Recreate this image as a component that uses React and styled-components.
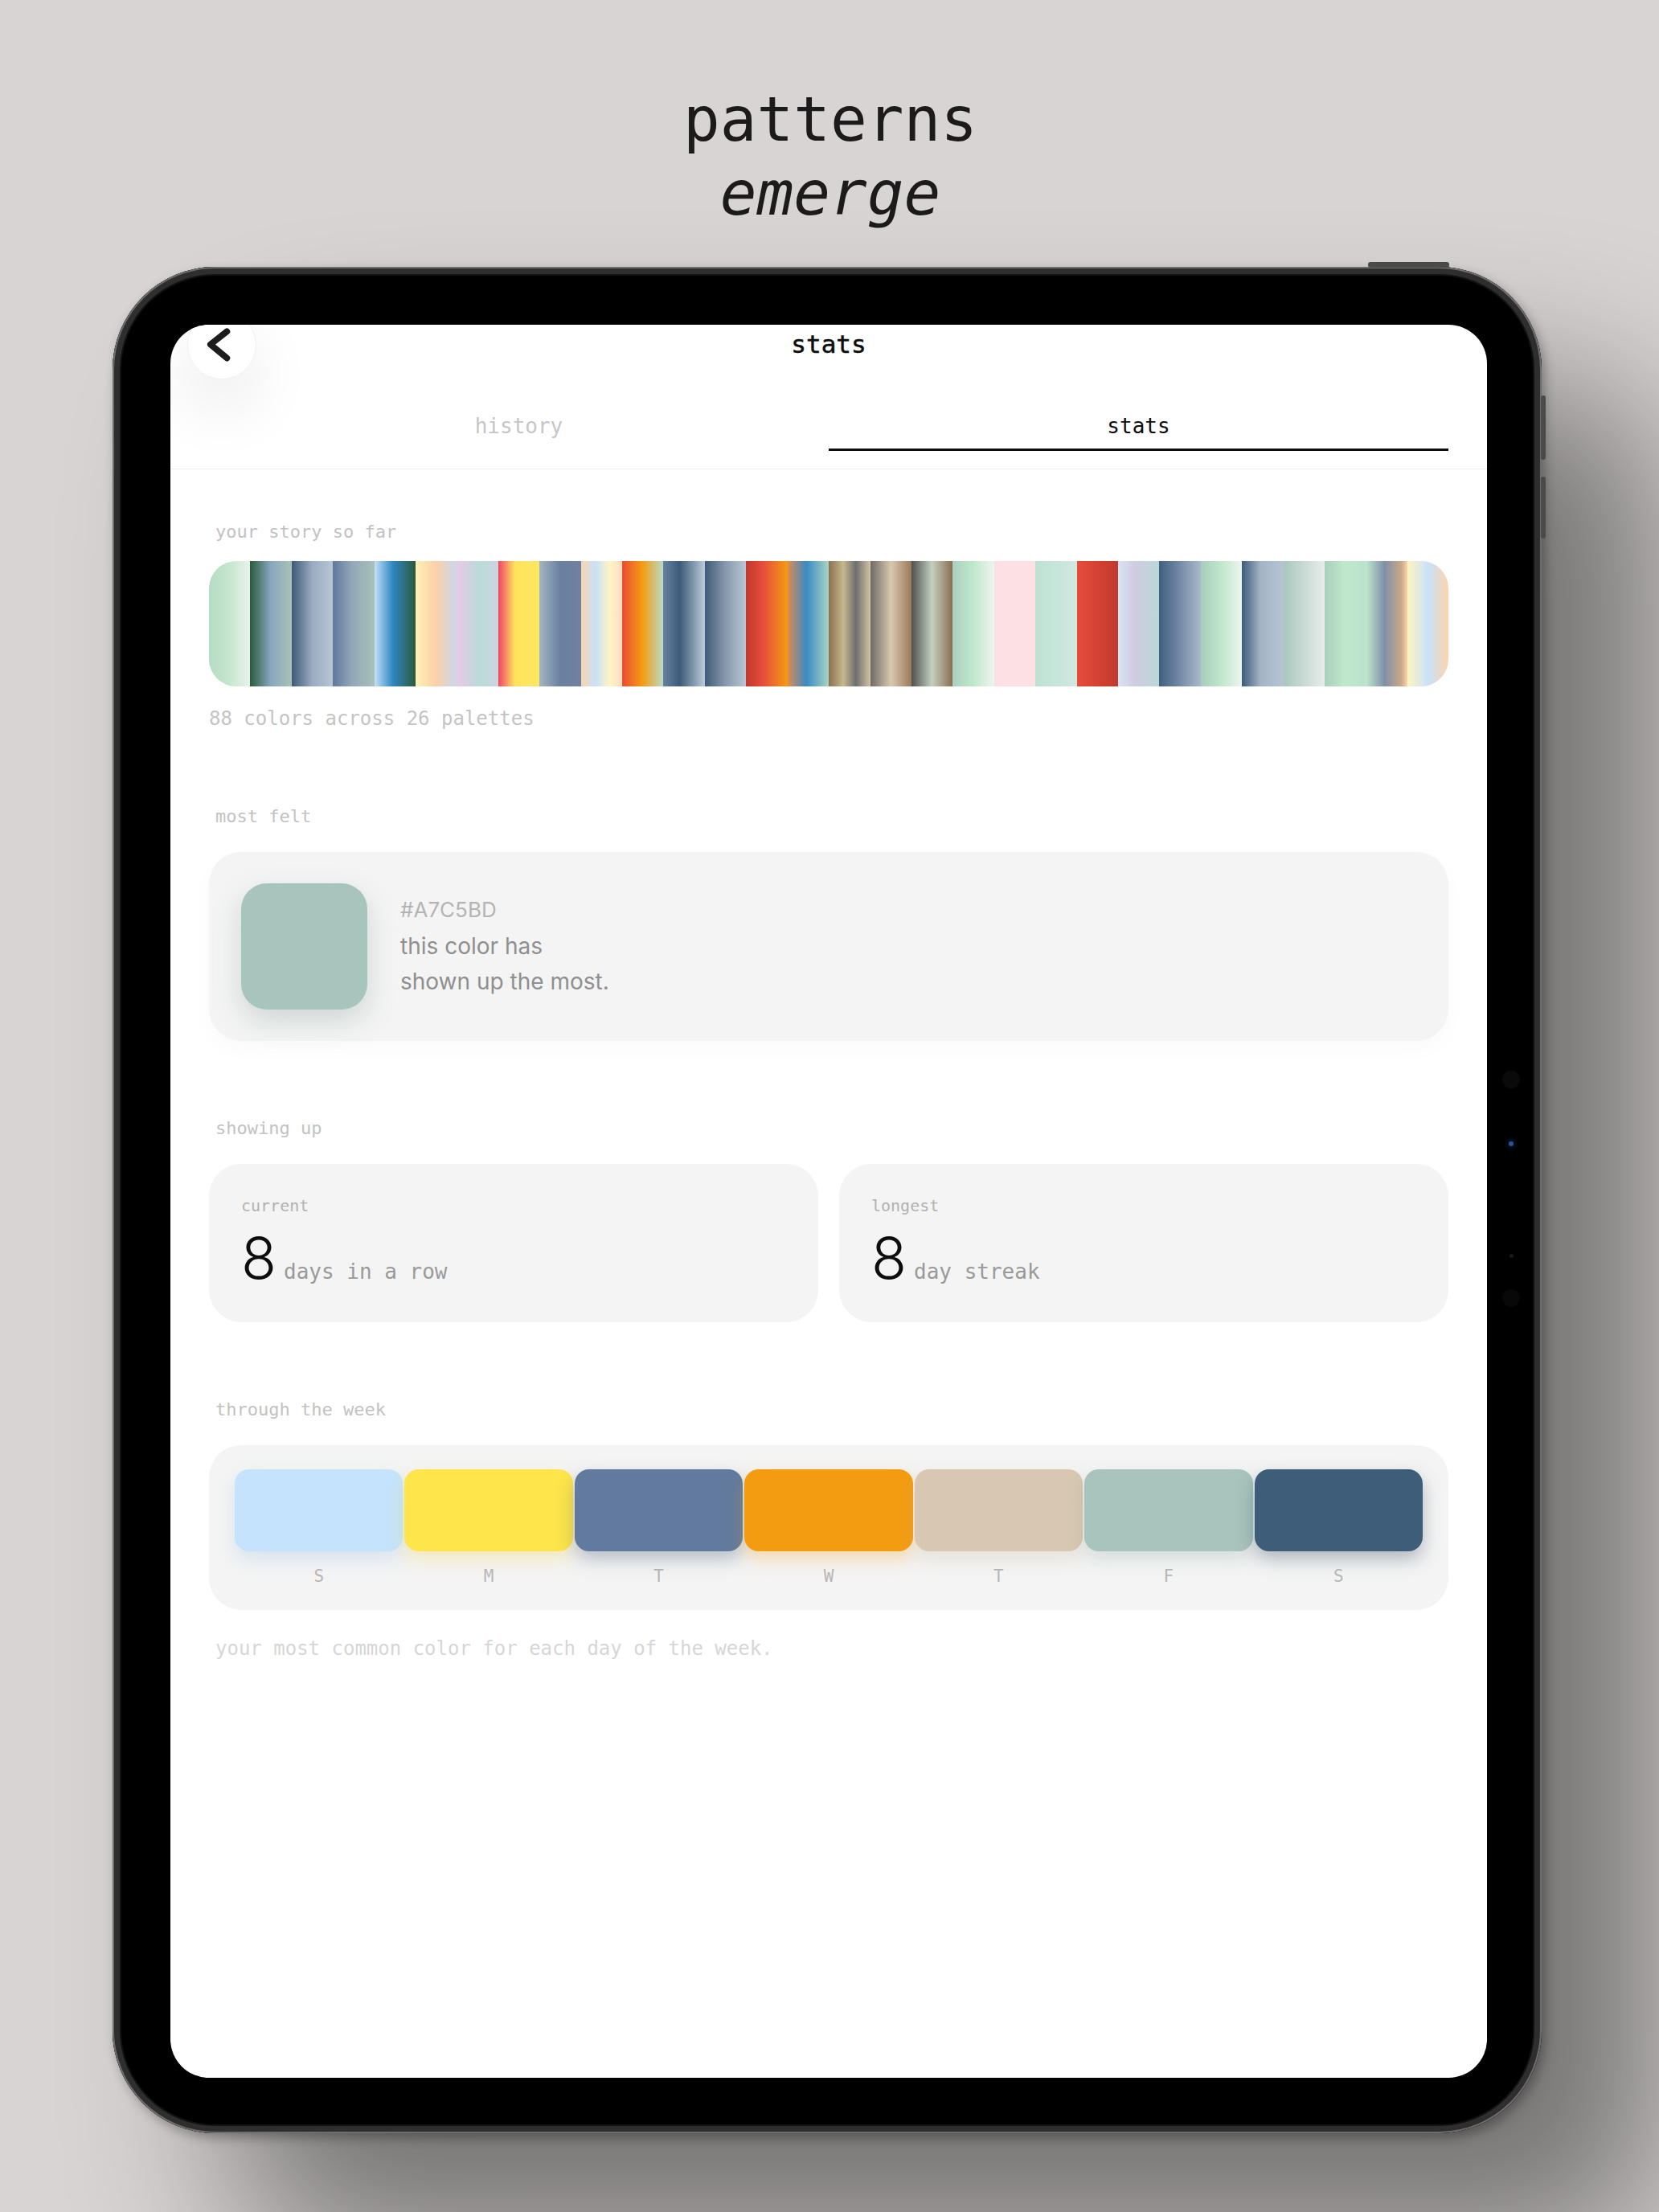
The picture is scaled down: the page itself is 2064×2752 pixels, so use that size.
import React from "react";
import styled, { createGlobalStyle } from "styled-components";

const mono = `"DejaVu Sans Mono", "Liberation Mono", monospace`;
const sans = `Inter, "Noto Sans", "Liberation Sans", sans-serif`;

const GlobalStyle = createGlobalStyle`
  html, body {
    margin: 0;
    padding: 0;
    background: #d8d4d3;
  }
  * {
    box-sizing: border-box;
  }
`;

const Page = styled.div`
  width: 2064px;
  height: 2752px;
  overflow: hidden;
  background: #d8d4d3;
  padding-top: 103px;
`;

const Headline = styled.h1`
  margin: 0;
  text-align: center;
  font-family: ${mono};
  font-weight: 400;
  font-size: 76px;
  line-height: 92px;
  color: #1c1a1a;
  padding-left: 2px;
`;

const HeadLine = styled.span`
  display: block;
  font-style: ${(p) => (p.$italic ? "italic" : "normal")};
`;

const Device = styled.div`
  position: relative;
  width: 1778px;
  height: 2322px;
  margin: 45px 0 0 140px;
  padding: 72px 68px 69px 72px;
  border-radius: 128px;
  background: #000;
  box-shadow:
    inset 0 0 0 2px #6e6e6e,
    inset 0 0 0 9px #2e2e2e,
    inset 0 0 0 11px #111,
    4px 6px 14px rgba(0, 0, 0, 0.3),
    150px 150px 200px rgba(0, 0, 0, 0.45);
`;

const HardButton = styled.span`
  position: absolute;
  background: #4a4a4a;
  border-radius: 3px;
  ${(p) =>
    p.$side
      ? `right: -5px; top: ${p.$top}px; width: 6px; height: ${p.$length}px;`
      : `top: -6px; left: ${p.$left}px; height: 7px; width: ${p.$length}px;`}
`;

const Sensor = styled.span`
  position: absolute;
  left: ${(p) => 1740 - p.$size / 2}px;
  top: ${(p) => p.$top - p.$size / 2}px;
  width: ${(p) => p.$size}px;
  height: ${(p) => p.$size}px;
  border-radius: 50%;
  background: ${(p) => p.$color};
  box-shadow: ${(p) => p.$glow || "none"};
`;

const Screen = styled.div`
  position: relative;
  width: 100%;
  height: 100%;
  border-radius: 48px;
  background: #fff;
  overflow: hidden;
  display: flex;
  flex-direction: column;
`;

const BackButton = styled.button`
  position: absolute;
  left: 21px;
  top: -18px;
  width: 86px;
  height: 86px;
  padding: 0;
  border-radius: 50%;
  border: 1px solid #f1f1f1;
  background: #fff;
  box-shadow: 0 36px 80px rgba(0, 0, 0, 0.09);
  display: flex;
  align-items: center;
  justify-content: center;
`;

const Header = styled.header`
  height: 48px;
  display: flex;
  align-items: center;
  justify-content: center;
`;

const Title = styled.div`
  font-family: ${mono};
  font-size: 31px;
  line-height: 48px;
  color: #0d0d0d;
  -webkit-text-stroke: 0.5px #0d0d0d;
`;

const TabBar = styled.nav`
  display: flex;
  padding: 58px 48px 22px;
  border-bottom: 1px solid #efefef;
`;

const Tab = styled.div`
  flex: 1;
  text-align: center;
  font-family: ${mono};
  font-size: 26px;
  line-height: 40px;
  padding-bottom: 8px;
  color: ${(p) => (p.$active ? "#0d0d0d" : "#c6c6c6")};
  border-bottom: 3px solid ${(p) => (p.$active ? "#0d0d0d" : "transparent")};
`;

const Content = styled.main`
  padding: 63px 48px 0;
  display: flex;
  flex-direction: column;
`;

const Section = styled.section`
  display: flex;
  flex-direction: column;
  margin-top: ${(p) => p.$space || 0}px;
`;

const Label = styled.div`
  font-family: ${mono};
  font-size: 22px;
  line-height: 30px;
  padding-left: 8px;
  color: #c2c2c2;
  margin-bottom: ${(p) => p.$gap ?? 29}px;
`;

const Caption = styled.div`
  font-family: ${mono};
  font-size: 24px;
  line-height: 32px;
  color: ${(p) => p.$color || "#c4c4c4"};
  padding-left: ${(p) => p.$indent || 0}px;
  margin-top: ${(p) => p.$gap || 22}px;
`;

const StoryBar = styled.div`
  display: flex;
  height: 156px;
  border-radius: 34px;
  overflow: hidden;
`;

const Stripe = styled.div`
  flex: 1;
  background: ${(p) => p.$fill};
`;

const Card = styled.div`
  background: #f4f4f4;
  border-radius: 40px;
`;

const FeltCard = styled(Card)`
  display: flex;
  align-items: center;
  gap: 41px;
  padding: 39px 40px;
  box-shadow: 0 10px 26px rgba(0, 0, 0, 0.025);
`;

const BigSwatch = styled.div`
  width: 157px;
  height: 157px;
  border-radius: 32px;
  background: ${(p) => p.$color};
  box-shadow: 0 14px 34px rgba(110, 140, 132, 0.28);
`;

const FeltText = styled.div`
  display: flex;
  flex-direction: column;
  font-family: ${sans};
  padding-top: 4px;
`;

const Hex = styled.div`
  font-size: 26px;
  line-height: 32px;
  color: #b4b4b4;
  margin-bottom: 7px;
`;

const Desc = styled.div`
  font-size: 28px;
  line-height: 44px;
  color: #8f8f8f;
`;

const StreakGrid = styled.div`
  display: grid;
  grid-template-columns: 1fr 1fr;
  gap: 26px;
`;

const StreakCard = styled(Card)`
  padding: 38px 40px 44px;
`;

const SmallLabel = styled.div`
  font-family: ${mono};
  font-size: 20px;
  line-height: 28px;
  color: #b2b2b2;
  margin-bottom: 15px;
`;

const StreakRow = styled.div`
  display: flex;
  align-items: baseline;
  height: 72px;
`;

const Count = styled.span`
  font-family: ${sans};
  font-weight: 300;
  font-size: 72px;
  line-height: 72px;
  color: #0d0d0d;
  margin-right: 9px;
`;

const Unit = styled.span`
  font-family: ${mono};
  font-size: 26px;
  color: #9a9a9a;
`;

const WeekCard = styled(Card)`
  display: grid;
  grid-template-columns: repeat(7, 1fr);
  column-gap: 2px;
  padding: 30px 32px 28px;
`;

const Day = styled.div`
  display: flex;
  flex-direction: column;
  align-items: center;
`;

const DaySwatch = styled.div`
  width: 100%;
  height: 102px;
  border-radius: 18px;
  background: ${(p) => p.$color};
  box-shadow: 0 10px 22px ${(p) => p.$shadow};
`;

const DayName = styled.div`
  margin-top: 17px;
  font-family: ${mono};
  font-size: 21px;
  line-height: 28px;
  color: #b6b6b6;
`;

const stripes = [
  "linear-gradient(90deg, #b4dcc4, #c6e6cf 50%, #eaf3ec)",
  "linear-gradient(90deg, #2c5a3c, #8aa6c0 50%, #a9c2b4)",
  "linear-gradient(90deg, #3d5a7a, #9aacc0 50%, #b6c6d6)",
  "linear-gradient(90deg, #60789c, #92a6b8 45%, #a8c2ba)",
  "linear-gradient(90deg, #c4e0fa, #2e86c1 45%, #2c5a3c)",
  "linear-gradient(90deg, #fff0b4, #fcd0a8 50%, #c8d8ec)",
  "linear-gradient(90deg, #eac8e8, #b8dcd8 55%, #cdd4e2)",
  "linear-gradient(90deg, #f04468, #fde35c 40%, #fde860)",
  "linear-gradient(90deg, #a4b4c4, #6a80a0 50%, #7080a0)",
  "linear-gradient(90deg, #fcd4ac, #c8e2fa 35%, #fff4c4 70%, #fcdcc0)",
  "linear-gradient(90deg, #ea4c34, #f39c12 50%, #b8dcc8)",
  "linear-gradient(90deg, #6880a0, #3d5a7a 40%, #bccbd8)",
  "linear-gradient(90deg, #3d5a7a, #8898ac 50%, #b8c6d6)",
  "linear-gradient(90deg, #c0392b, #e74c3c 40%, #f39c12)",
  "linear-gradient(90deg, #e08a50, #3a8ac4 45%, #a8d4c4)",
  "linear-gradient(90deg, #8a7050, #c6b88e 35%, #6e6e6e 65%, #d4c4a4)",
  "linear-gradient(90deg, #6e6a66, #d8c8b0 50%, #9a7a58)",
  "linear-gradient(90deg, #505050, #c4d0c0 50%, #8a6e50)",
  "linear-gradient(90deg, #a8d0c0, #c0e8cc 50%, #eef4ef)",
  "#fce0e4",
  "linear-gradient(90deg, #bde2d4, #d2e8e0)",
  "linear-gradient(90deg, #e74c3c, #c0392b)",
  "linear-gradient(90deg, #d8e4f6, #d0cce2 40%, #b8d8d6)",
  "linear-gradient(90deg, #40607e, #6a80a0 40%, #aabaca)",
  "linear-gradient(90deg, #a8ccbc, #c0e8cc 50%, #eef4ef)",
  "linear-gradient(90deg, #3d5a7a, #a4b4c6 45%, #b6c4d4)",
  "linear-gradient(90deg, #a8c8bc, #e8ecec)",
  "linear-gradient(90deg, #a8d0bc, #c0e8cc 50%, #b8e2cc)",
  "linear-gradient(90deg, #c0e8cc, #8090a8 45%, #c8a888 85%, #fcd4a8)",
  "linear-gradient(90deg, #fff4c0, #c8e2fa 50%, #fcd4ac)",
];

const week = [
  { day: "S", color: "#c5e3fc", shadow: "rgba(150, 190, 230, 0.3)" },
  { day: "M", color: "#fde54b", shadow: "rgba(240, 210, 60, 0.3)" },
  { day: "T", color: "#627a9e", shadow: "rgba(70, 90, 120, 0.35)" },
  { day: "W", color: "#f39c12", shadow: "rgba(243, 156, 18, 0.3)" },
  { day: "T", color: "#d8c8b2", shadow: "rgba(190, 170, 140, 0.25)" },
  { day: "F", color: "#a8c4bc", shadow: "rgba(130, 160, 150, 0.28)" },
  { day: "S", color: "#3d5d78", shadow: "rgba(50, 70, 95, 0.35)" },
];

const ChevronLeft = () => (
  <svg width="86" height="86" viewBox="0 0 86 86" fill="none">
    <path
      d="M49.5 26 L28.5 42.5 L49.5 60"
      stroke="#1c1c1c"
      strokeWidth="8"
      strokeLinecap="round"
      strokeLinejoin="round"
    />
  </svg>
);

const App = () => {
  return (
    <Page>
      <GlobalStyle />
      <Headline>
        <HeadLine>patterns</HeadLine>
        <HeadLine $italic>emerge</HeadLine>
      </Headline>
      <Device>
        <HardButton $left={1562} $length={101} />
        <HardButton $side $top={160} $length={80} />
        <HardButton $side $top={261} $length={77} />
        <Sensor $top={1011} $size={22} $color="#0a0a0b" />
        <Sensor
          $top={1091}
          $size={6}
          $color="#2f4f95"
          $glow="0 0 6px 2px rgba(40, 70, 140, 0.4)"
        />
        <Sensor $top={1230} $size={5} $color="#1a1a1a" />
        <Sensor $top={1283} $size={22} $color="#080809" />
        <Screen>
          <BackButton aria-label="back">
            <ChevronLeft />
          </BackButton>
          <Header>
            <Title>stats</Title>
          </Header>
          <TabBar>
            <Tab>history</Tab>
            <Tab $active>stats</Tab>
          </TabBar>
          <Content>
            <Section>
              <Label $gap={21}>your story so far</Label>
              <StoryBar>
                {stripes.map((fill, i) => (
                  <Stripe key={i} $fill={fill} />
                ))}
              </StoryBar>
              <Caption $gap={24}>88 colors across 26 palettes</Caption>
            </Section>

            <Section $space={91}>
              <Label>most felt</Label>
              <FeltCard>
                <BigSwatch $color="#A7C5BD" />
                <FeltText>
                  <Hex>#A7C5BD</Hex>
                  <Desc>
                    this color has
                    <br />
                    shown up the most.
                  </Desc>
                </FeltText>
              </FeltCard>
            </Section>

            <Section $space={94}>
              <Label>showing up</Label>
              <StreakGrid>
                <StreakCard>
                  <SmallLabel>current</SmallLabel>
                  <StreakRow>
                    <Count>8</Count>
                    <Unit>days in a row</Unit>
                  </StreakRow>
                </StreakCard>
                <StreakCard>
                  <SmallLabel>longest</SmallLabel>
                  <StreakRow>
                    <Count>8</Count>
                    <Unit>day streak</Unit>
                  </StreakRow>
                </StreakCard>
              </StreakGrid>
            </Section>

            <Section $space={94}>
              <Label>through the week</Label>
              <WeekCard>
                {week.map((d, i) => (
                  <Day key={i}>
                    <DaySwatch $color={d.color} $shadow={d.shadow} />
                    <DayName>{d.day}</DayName>
                  </Day>
                ))}
              </WeekCard>
              <Caption $color="#d6d6d6" $indent={8} $gap={32}>
                your most common color for each day of the week.
              </Caption>
            </Section>
          </Content>
        </Screen>
      </Device>
    </Page>
  );
};

export default App;
